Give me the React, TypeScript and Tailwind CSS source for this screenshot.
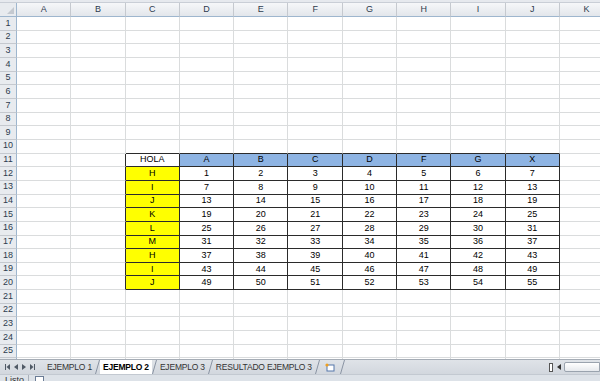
import React from 'react';

const COLS = ['A', 'B', 'C', 'D', 'E', 'F', 'G', 'H', 'I', 'J', 'K'];
const ROWS = Array.from({ length: 26 }, (_, i) => i + 1);
const LETTERS = ['H', 'I', 'J', 'K', 'L', 'M', 'H', 'I', 'J'];
const HEADS = ['A', 'B', 'C', 'D', 'F', 'G', 'X'];

// table sits in C11:J20 (col index 2..9, rows 11..20)
const inTable = (r: number, c: number) => r >= 11 && r <= 20 && c >= 2 && c <= 9;

const cellText = (r: number, c: number) => {
  if (!inTable(r, c)) return '';
  if (r === 11) return c === 2 ? 'HOLA' : HEADS[c - 3];
  if (c === 2) return LETTERS[r - 12];
  return String((r - 12) * 6 + (c - 3) + 1);
};

const Cell = ({ r, c }: { r: number; c: number }) => {
  const t = inTable(r, c);
  const darkRight = t || (c === 1 && r >= 11 && r <= 20);
  const darkBottom = t || (r === 10 && c >= 2 && c <= 9);
  let bg = 'bg-white';
  if (t && r === 11 && c > 2) bg = 'bg-[#8eb4e3]';
  if (t && r > 11 && c === 2) bg = 'bg-[#ffff00]';
  return (
    <div
      className={`flex items-center justify-center border-r border-b text-[9px] leading-none text-black ${bg} ${
        darkRight ? 'border-r-[#2b2b2b]' : 'border-r-[#dadcdd]'
      } ${darkBottom ? 'border-b-[#2b2b2b]' : 'border-b-[#dadcdd]'}`}
    >
      {cellText(r, c)}
    </div>
  );
};

const Slash = () => (
  <svg width="5" height="14" viewBox="0 0 5 14">
    <line x1="0.5" y1="14" x2="4.5" y2="0" stroke="#8a94a3" strokeWidth="1" />
  </svg>
);

const Tab = ({ label, active }: { label: string; active?: boolean }) => (
  <div className="flex items-center">
    <div
      className={`flex h-[14px] items-center px-[3px] text-[8.5px] tracking-[-0.2px] ${
        active ? 'bg-white font-bold text-black' : 'text-[#333]'
      }`}
    >
      {label}
    </div>
    <Slash />
  </div>
);

export default function App() {
  return (
    <div
      className="flex h-[381px] w-[600px] flex-col overflow-hidden bg-white"
      style={{ fontFamily: '"Liberation Sans", Arial, sans-serif' }}
    >
      <div className="h-[3px] border-b border-[#c9ced6] bg-[#e6e9ee]" />

      <div className="grid flex-1 grid-cols-[17px_repeat(11,54.3px)] grid-rows-[14px_repeat(26,13.67px)] overflow-hidden">
        {/* corner */}
        <div className="relative border-r border-b border-[#9eb6ce] bg-[#e8ebef]">
          <svg className="absolute right-[2px] bottom-[2px]" width="7" height="7" viewBox="0 0 7 7">
            <polygon points="7,0 7,7 0,7" fill="#c4c9d0" />
          </svg>
        </div>
        {COLS.map((c) => (
          <div
            key={c}
            className="flex items-center justify-center border-r border-b border-r-[#c5c9cf] border-b-[#9eb6ce] bg-gradient-to-b from-[#f6f7f9] to-[#e2e6eb] text-[9px] text-[#2d3b4e]"
          >
            {c}
          </div>
        ))}
        {ROWS.map((r) => (
          <React.Fragment key={r}>
            <div className="flex items-center justify-center border-r border-b border-r-[#9eb6ce] border-b-[#c5c9cf] bg-[#e8ebef] text-[9px] text-[#2d3b4e]">
              {r}
            </div>
            {COLS.map((_, c) => (
              <Cell key={c} r={r} c={c} />
            ))}
          </React.Fragment>
        ))}
      </div>

      {/* sheet tabs + scrollbar */}
      <div className="flex h-[15px] items-start border-t border-[#a5acb5] bg-gradient-to-b from-[#dfe3e8] to-[#d2d7de]">
        <div className="flex h-[14px] w-[44px] items-center gap-[4px] pl-[5px]">
          <svg width="5" height="6" viewBox="0 0 5 6">
            <rect x="0" y="0" width="1" height="6" fill="#505a66" />
            <polygon points="5,0 5,6 1.5,3" fill="#505a66" />
          </svg>
          <svg width="4" height="6" viewBox="0 0 4 6">
            <polygon points="4,0 4,6 0,3" fill="#505a66" />
          </svg>
          <svg width="4" height="6" viewBox="0 0 4 6">
            <polygon points="0,0 0,6 4,3" fill="#505a66" />
          </svg>
          <svg width="5" height="6" viewBox="0 0 5 6">
            <polygon points="0,0 0,6 3.5,3" fill="#505a66" />
            <rect x="4" y="0" width="1" height="6" fill="#505a66" />
          </svg>
        </div>
        <Tab label="EJEMPLO 1" />
        <Tab label="EJEMPLO 2" active />
        <Tab label="EJEMPLO 3" />
        <Tab label="RESULTADO EJEMPLO 3" />
        <div className="flex h-[14px] w-[20px] items-center justify-center">
          <svg width="11" height="9" viewBox="0 0 11 9">
            <rect x="3" y="2" width="7" height="6" fill="#fff" stroke="#5577aa" strokeWidth="1" />
            <circle cx="3" cy="2" r="1.6" fill="#f0a020" />
          </svg>
        </div>
        <Slash />
        <div className="flex-1" />
        <div className="mt-[2px] flex items-center">
          <div className="h-[9px] w-[4px] border border-[#555] bg-white" />
          <svg className="ml-[4px]" width="4" height="6" viewBox="0 0 4 6">
            <polygon points="4,0 4,6 0,3" fill="#333" />
          </svg>
          <div className="ml-[3px] h-[10px] w-[36px] rounded-l-[2px] border border-[#9aa3ae] bg-gradient-to-b from-white to-[#e6e9ed]" />
        </div>
      </div>

      {/* status bar */}
      <div className="flex h-[7px] items-start overflow-hidden border-t border-[#c3c9d1] bg-[#dde2e8]">
        <span className="pl-[5px] pt-[1px] text-[9px] leading-none text-[#333]">Listo</span>
        <div className="ml-[4px] h-[7px] border-l border-[#a9b0ba]" />
        <div className="ml-[6px] mt-[1px] h-[6px] w-[9px] border border-[#6b7c95] bg-white" />
      </div>
    </div>
  );
}
